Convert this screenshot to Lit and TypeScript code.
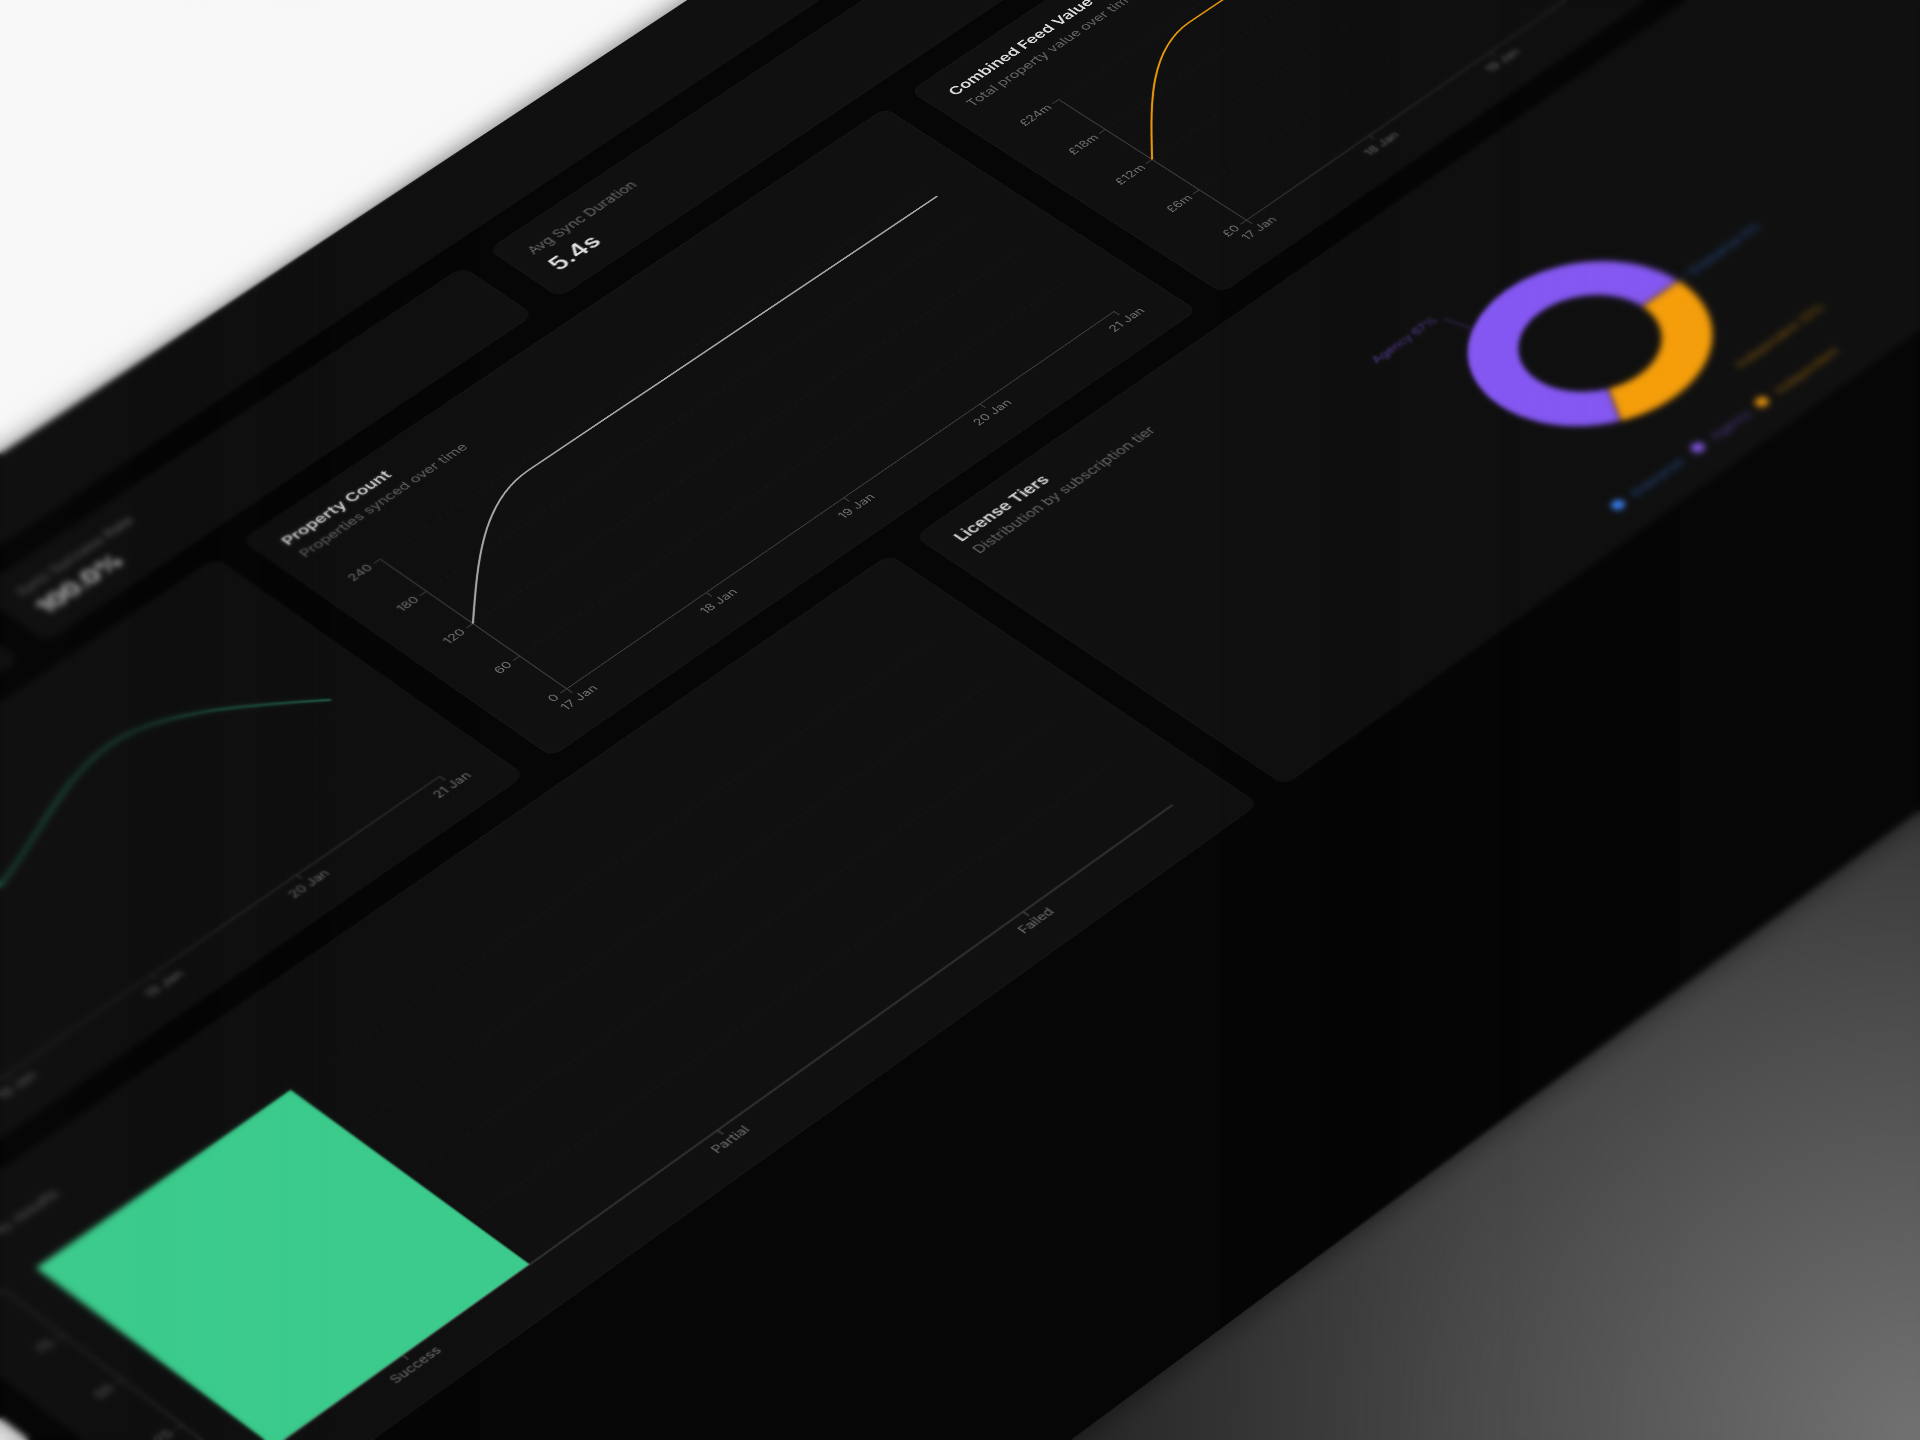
import { LitElement, html, css, svg } from "lit";
import { customElement } from "lit/decorators.js";

const K = 1920 / 1568;
// landmarks: flat coordinates (x, y relative to the chart row) -> thumbnail coordinates of the reference
const MARKS: number[][] = [
  [708, 295, 459, 560],
  [708, 91, 311, 456],
  [1224, 295, 908, 254],
  [1348, 295, 1013, 180],
  [1348, 91, 868, 85],
  [908, 707, 957, 657],
  [326, 707, 432, 1035],
  [326, 455, 240, 891],
  [104, 455, 30, 1035],
  [592, 295, 358, 632],
  [948, 364, 727, 454],
  [948, 752, 1027, 655],
  [972, 752, 1048, 645],
  [1264, 0, 722, 91],
  [1264, 340, 975, 252],
  [656, 340, 447, 620],
  [656, 0, 197, 441],
  [769, 707, 838, 745],
  [492, 707, 590, 920],
];
const TOP = 204;

function solve(M: number[][], v: number[]): number[] {
  const n = v.length;
  const A = M.map((r, i) => [...r, v[i]]);
  for (let c = 0; c < n; c++) {
    let p = c;
    for (let r = c + 1; r < n; r++) if (Math.abs(A[r][c]) > Math.abs(A[p][c])) p = r;
    [A[c], A[p]] = [A[p], A[c]];
    for (let r = 0; r < n; r++) {
      if (r === c) continue;
      const f = A[r][c] / A[c][c];
      for (let k = c; k <= n; k++) A[r][k] -= f * A[c][k];
    }
  }
  return A.map((r, i) => r[n] / r[i]);
}

function homography(): string {
  const N: number[][] = Array.from({ length: 8 }, () => new Array(8).fill(0));
  const R: number[] = new Array(8).fill(0);
  const add = (row: number[], t: number) => {
    for (let i = 0; i < 8; i++) {
      R[i] += row[i] * t;
      for (let j = 0; j < 8; j++) N[i][j] += row[i] * row[j];
    }
  };
  for (const [fx, fy, tx, ty] of MARKS) {
    const x = fx / 1000, y = (fy + TOP) / 1000;
    const X = (tx * K) / 1000, Y = (ty * K) / 1000;
    add([x, y, 1, 0, 0, 0, -x * X, -y * X], X);
    add([0, 0, 0, x, y, 1, -x * Y, -y * Y], Y);
  }
  const [a, b, c, d, e, f, g, h] = solve(N, R);
  return `matrix3d(${[a, d, 0, g / 1000, b, e, 0, h / 1000, 0, 0, 1, 0, c * 1000, f * 1000, 0, 1].join(",")})`;
}

function monotone(pts: number[][]): string {
  const n = pts.length;
  const s: number[] = [];
  for (let i = 0; i < n - 1; i++) s.push((pts[i + 1][1] - pts[i][1]) / (pts[i + 1][0] - pts[i][0]));
  const t: number[] = new Array(n).fill(0);
  for (let i = 1; i < n - 1; i++) {
    const h0 = pts[i][0] - pts[i - 1][0], h1 = pts[i + 1][0] - pts[i][0];
    const p = (s[i - 1] * h1 + s[i] * h0) / (h0 + h1);
    t[i] = (Math.sign(s[i - 1]) + Math.sign(s[i])) * Math.min(Math.abs(s[i - 1]), Math.abs(s[i]), 0.5 * Math.abs(p)) || 0;
  }
  t[0] = (3 * s[0] - t[1]) / 2;
  t[n - 1] = (3 * s[n - 2] - t[n - 2]) / 2;
  let d = `M${pts[0][0]},${pts[0][1]}`;
  for (let i = 0; i < n - 1; i++) {
    const dx = (pts[i + 1][0] - pts[i][0]) / 3;
    d += `C${pts[i][0] + dx},${pts[i][1] + dx * t[i]} ${pts[i + 1][0] - dx},${pts[i + 1][1] - dx * t[i + 1]} ${pts[i + 1][0]},${pts[i + 1][1]}`;
  }
  return d;
}

const PT = 37; // plot top within chart svg
const DAYS = ["17 Jan", "18 Jan", "19 Jan", "20 Jan", "21 Jan"];

function yAxis(x: number, top: number, bottom: number, labels: string[]) {
  return labels.map((l, i) => {
    const y = top + ((bottom - top) * i) / (labels.length - 1);
    return svg`<line class="tick" x1=${x - 6} x2=${x} y1=${y} y2=${y}></line>
      <text class="lab" x=${x - 9} y=${y + 3.5} text-anchor="end">${l}</text>`;
  });
}

function grid(x0: number, x1: number, top: number, bottom: number) {
  const ys = [0, 1, 2, 3].map((i) => top + ((bottom - top) * i) / 4);
  return ys.map((y) => svg`<line class="grid" x1=${x0} x2=${x1} y1=${y} y2=${y}></line>`);
}

function lineChart(values: number[], max: number, labels: string[], color: string, L = 52, R = 568) {
  const B = 241;
  const xs = values.map((_, i) => L + ((R - L) * i) / (values.length - 1));
  const pts = values.map((v, i) => [xs[i], B - (v / max) * (B - PT)]);
  return html`<svg class="plot" viewBox="0 0 608 286">
    ${grid(L, R, PT, B)}
    <line class="axis" x1=${L} x2=${L} y1=${PT} y2=${B}></line>
    <line class="axis" x1=${L} x2=${R} y1=${B} y2=${B}></line>
    ${yAxis(L, PT, B, labels)}
    ${xs.map(
      (x, i) => svg`<line class="tick" x1=${x} x2=${x} y1=${B} y2=${B + 6}></line>
        <text class="lab" x=${x} y=${B + 17} text-anchor="middle">${DAYS[i]}</text>`
    )}
    <path class="curve" d=${monotone(pts)} stroke=${color}></path>
  </svg>`;
}

function barChart() {
  const L = 52, R = 884, B = 289;
  const band = (R - L) / 3;
  const names = ["Success", "Partial", "Failed"];
  const xs = names.map((_, i) => L + band * (i + 0.5));
  return html`<svg class="plot" viewBox="0 0 924 334">
    ${grid(L, R, PT, B)}
    <rect x=${L + band * 0.1} y=${PT} width=${band * 0.8} height=${B - PT} fill="#3ccb8c"></rect>
    <line class="axis bright" x1=${L} x2=${R} y1=${B} y2=${B}></line>
    <line class="axis" x1=${L} x2=${L} y1=${PT} y2=${B}></line>
    ${yAxis(L, PT, B, ["100", "75", "50", "25", "0"])}
    ${names.map(
      (n, i) => svg`<line class="tick bright" x1=${xs[i]} x2=${xs[i]} y1=${B} y2=${B + 6}></line>
        <text class="lab" x=${xs[i]} y=${B + 17} text-anchor="middle">${n}</text>`
    )}
  </svg>`;
}

function arc(cx: number, cy: number, R: number, r: number, a0: number, a1: number): string {
  // angles in degrees, counter-clockwise from 3 o'clock
  const p = (rad: number, a: number) => {
    const t = (a * Math.PI) / 180;
    return `${cx + rad * Math.cos(t)},${cy - rad * Math.sin(t)}`;
  };
  const large = a1 - a0 > 180 ? 1 : 0;
  return `M${p(R, a0)}A${R},${R} 0 ${large} 0 ${p(R, a1)}L${p(r, a1)}A${r},${r} 0 ${large} 1 ${p(r, a0)}Z`;
}

function donut() {
  const cx = 452, cy = 164, R = 88, r = 51;
  const legend = [
    { x: 348, c: "#3b82f6", t: "Enterprise" },
    { x: 426, c: "#8b5cf6", t: "Agency" },
    { x: 489, c: "#f59e0b", t: "Independent" },
  ];
  return html`<svg class="plot" viewBox="0 0 924 334">
    <path d=${arc(cx, cy, R, r, 0, 241.2)} fill="#8558f2" stroke="#101010" stroke-width="1"></path>
    <path d=${arc(cx, cy, R, r, 241.2, 360)} fill="#f59e0b" stroke="#101010" stroke-width="1"></path>
    <path class="lead" stroke="#8b5cf6" d="M${cx - 45},${cy - 78} L${cx - 50},${cy - 98} L${cx - 52},${cy - 98}"></path>
    <path class="lead" stroke="#3b82f6" d="M${cx + 90},${cy} L${cx + 98},${cy}"></path>
    <text class="pie" x=${cx - 54} y=${cy - 101} text-anchor="end" fill="#8b5cf6">Agency 67%</text>
    <text class="pie" x=${cx + 100} y=${cy + 4} fill="#3b82f6">Enterprise 0%</text>
    <text class="pie" x=${cx + 52} y=${cy + 102} fill="#f59e0b">Independent 33%</text>
    ${legend.map(
      (l) => svg`<circle cx=${l.x} cy="303" r="5" fill=${l.c}></circle>
        <text class="pie" x=${l.x + 14} y="307" fill=${l.c}>${l.t}</text>`
    )}
  </svg>`;
}

const STATS = [
  ["Total Syncs", "5"],
  ["Sync Success Rate", "100.0%"],
  ["Avg Sync Duration", "5.4s"],
  ["Last Sync", "2h ago"],
];

@customElement("app-root")
export class AppRoot extends LitElement {
  static styles = css`
    :host {
      display: block;
      position: relative;
      width: 1920px;
      height: 1440px;
      overflow: hidden;
      font-family: Inter, "Liberation Sans", sans-serif;
      background:
        linear-gradient(135deg, #f8f8f8 50%, transparent 50%),
        radial-gradient(circle 960px at 100% 100%, #727272 0%, #4c4c4c 45%, #2c2c2c 80%, #1e1e1e 100%);
    }
    .window {
      position: absolute;
      left: 0;
      top: 0;
      width: 1920px;
      height: 1309px;
      transform-origin: 0 0;
      background: #060606;
      box-shadow: 0 0 24px rgba(0, 0, 0, 0.55);
      display: flex;
      flex-direction: column;
    }
    .topbar {
      height: 76px;
      flex: none;
      background: #101010;
    }
    .content {
      padding: 24px;
      display: flex;
      flex-direction: column;
      gap: 24px;
    }
    .stats {
      display: grid;
      grid-template-columns: repeat(4, 1fr);
      gap: 24px;
    }
    .row3 {
      display: grid;
      grid-template-columns: repeat(3, 1fr);
      gap: 24px;
    }
    .row2 {
      display: grid;
      grid-template-columns: repeat(2, 1fr);
      gap: 24px;
    }
    .card {
      background: #101010;
      border-radius: 9px;
      box-shadow: inset 0 0 0 1px rgba(255, 255, 255, 0.02);
      display: flex;
      flex-direction: column;
    }
    .stat {
      height: 80px;
      box-sizing: border-box;
      padding: 17px 18px;
    }
    .stat-label {
      font-size: 11.4px;
      line-height: 18px;
      color: #6a6a6a;
    }
    .stat-value {
      font-size: 19.5px;
      line-height: 27px;
      margin-top: 3px;
      font-weight: 600;
      color: #dedede;
    }
    .row3 .card {
      height: 340px;
    }
    .row2 .card {
      height: 388px;
    }
    .head {
      height: 54px;
      flex: none;
      box-sizing: border-box;
      padding: 15px 18px 0;
    }
    .title {
      font-size: 13px;
      line-height: 20px;
      font-weight: 600;
      color: #dcdcdc;
    }
    .sub {
      font-size: 11.4px;
      line-height: 20px;
      color: #666666;
    }
    .plot {
      display: block;
      width: 100%;
      flex: 1;
      min-height: 0;
      overflow: visible;
    }
    .grid {
      stroke: rgba(255, 255, 255, 0.022);
      stroke-width: 1;
      stroke-dasharray: 3 3;
    }
    .axis {
      stroke: #383838;
      stroke-width: 1;
    }
    .axis.bright {
      stroke: #484848;
    }
    .tick {
      stroke: #383838;
      stroke-width: 1;
    }
    .tick.bright {
      stroke: #484848;
    }
    .lab {
      font-size: 10px;
      fill: #707070;
    }
    .pie {
      font-size: 10px;
      opacity: 0.6;
    }
    .curve {
      fill: none;
      stroke-width: 1.5;
    }
    .lead {
      fill: none;
      stroke-width: 1;
      opacity: 0.5;
    }
    .blur {
      position: absolute;
      inset: 0;
      pointer-events: none;
    }
    .b0 {
      backdrop-filter: blur(0.5px);
    }
    .b1 {
      backdrop-filter: blur(1px);
      -webkit-mask-image: linear-gradient(90deg, #000 0, #000 260px, transparent 480px, transparent 1220px, #000 1400px);
      mask-image: linear-gradient(90deg, #000 0, #000 260px, transparent 480px, transparent 1220px, #000 1400px);
    }
    .b2 {
      backdrop-filter: blur(2px);
      -webkit-mask-image: linear-gradient(90deg, #000 0, #000 130px, transparent 330px, transparent 1320px, #000 1520px);
      mask-image: linear-gradient(90deg, #000 0, #000 130px, transparent 330px, transparent 1320px, #000 1520px);
    }
    .b3 {
      backdrop-filter: blur(2.5px);
      -webkit-mask-image: linear-gradient(90deg, #000 0, #000 70px, transparent 220px, transparent 1500px, #000 1680px);
      mask-image: linear-gradient(90deg, #000 0, #000 70px, transparent 220px, transparent 1500px, #000 1680px);
    }
  `;

  private chart(title: string, sub: string, body: unknown) {
    return html`<div class="card">
      <div class="head">
        <div class="title">${title}</div>
        <div class="sub">${sub}</div>
      </div>
      ${body}
    </div>`;
  }

  render() {
    return html`
      <div class="window" style="transform:${homography()}">
        <div class="topbar"></div>
        <div class="content">
          <div class="stats">
            ${STATS.map(
              ([l, v]) => html`<div class="card stat">
                <div class="stat-label">${l}</div>
                <div class="stat-value">${v}</div>
              </div>`
            )}
          </div>
          <div class="row3">
            ${this.chart("Success Rate", "Sync success over time", lineChart([28, 48, 76, 99, 58], 100, ["100%", "75%", "50%", "25%", "0%"], "#2b8f68"))}
            ${this.chart("Property Count", "Properties synced over time", lineChart([120, 229, 228, 227, 226], 240, ["240", "180", "120", "60", "0"], "#a8a8a8"))}
            ${this.chart("Combined Feed Value", "Total property value over time", lineChart([12, 22.9, 22.8, 22.7, 22.6], 24, ["£24m", "£18m", "£12m", "£6m", "£0"], "#e8960a", 65, 548))}
          </div>
          <div class="row2">
            ${this.chart("Sync Status", "Status of sync results", barChart())}
            ${this.chart("License Tiers", "Distribution by subscription tier", donut())}
          </div>
        </div>
      </div>
      <div class="blur b0"></div>
      <div class="blur b1"></div>
      <div class="blur b2"></div>
      <div class="blur b3"></div>
    `;
  }
}
